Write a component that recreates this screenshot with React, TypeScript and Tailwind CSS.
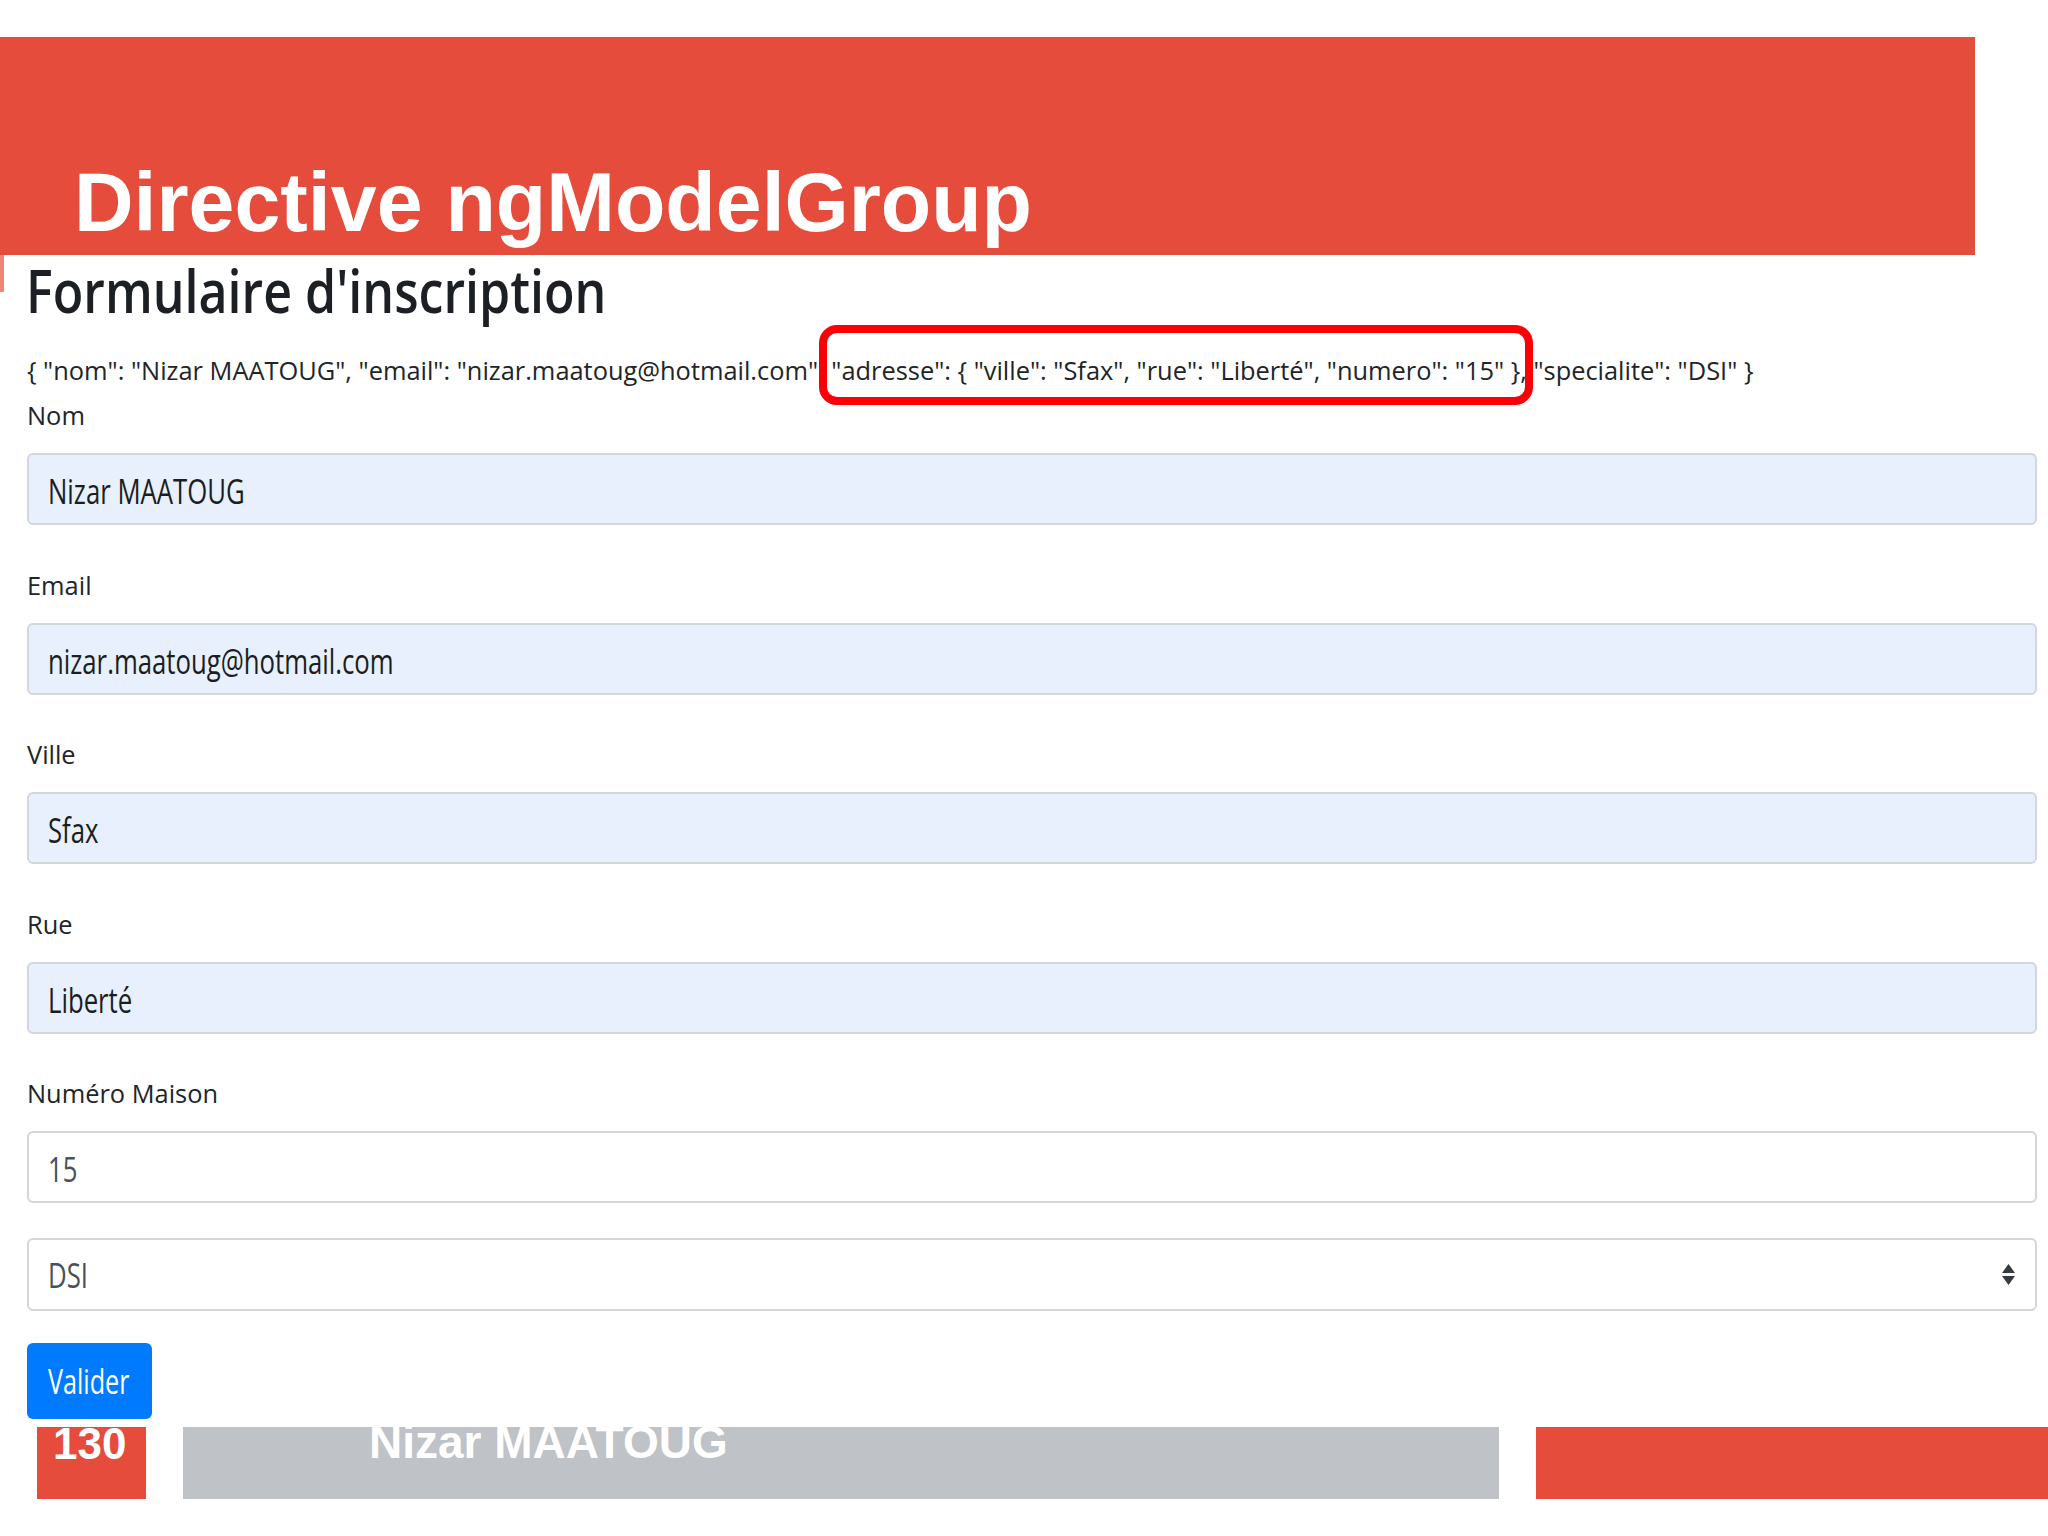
import { useState } from 'react';

const RED = 'bg-[#e54c3c]';

const fields = [
  { label: 'Nom', value: 'Nizar MAATOUG', filled: true },
  { label: 'Email', value: 'nizar.maatoug@hotmail.com', filled: true },
  { label: 'Ville', value: 'Sfax', filled: true },
  { label: 'Rue', value: 'Liberté', filled: true },
  { label: 'Numéro Maison', value: '15', filled: false },
];

function FieldBox({ value, filled }: { value: string; filled: boolean }) {
  return (
    <div
      className={
        filled
          ? 'mt-[20px] h-[72px] rounded-[6px] border-2 border-[#d3d6db] bg-[#e8f0fe] pl-[19px] text-[35px] leading-[71px] text-[#1b1e21]'
          : 'mt-[20px] h-[72px] rounded-[6px] border-2 border-[#d3d6db] bg-white pl-[19px] text-[35px] leading-[71px] text-[#495057]'
      }
    >
      <span className="inline-block origin-left scale-x-[0.735] whitespace-nowrap">{value}</span>
    </div>
  );
}

function SelectArrows() {
  return (
    <svg width="13" height="21" viewBox="0 0 13 21" className="shrink-0">
      <polygon points="6.5,0 13,9 0,9" fill="#343a40" />
      <polygon points="0,12 13,12 6.5,21" fill="#343a40" />
    </svg>
  );
}

export default function App() {
  const [specialite] = useState('DSI');

  return (
    <div className="relative h-[1536px] w-[2048px] overflow-hidden bg-white font-['Open_Sans',sans-serif] text-[#212529]">
      {/* slide header */}
      <div className={`mt-[37px] h-[218px] w-[1975px] ${RED} pl-[74px] pt-[124px]`}>
        <h1 className="font-['Liberation_Sans',Arial,sans-serif] text-[82.5px] font-bold leading-[82px] text-white whitespace-nowrap">
          Directive ngModelGroup
        </h1>
      </div>

      <div className="relative pl-[27px] pr-[11px]">
        <div className={`absolute left-0 top-0 h-[37px] w-[4px] bg-[#ec8478]`} />

        <h2 className="-ml-[1px] h-[70px] text-[60px] font-semibold leading-[70px] whitespace-nowrap text-[#1c1f23]">
          <span className="inline-block origin-left scale-x-[0.835]">Formulaire d'inscription</span>
        </h2>

        <div className="mt-[27px] h-[36px] text-[25.4px] leading-[36px] whitespace-nowrap">
          {'{ "nom": "Nizar MAATOUG", "email": "nizar.maatoug@hotmail.com", '}
          <span className="relative">
            {'"adresse": { "ville": "Sfax", "rue": "Liberté", "numero": "15" },'}
            <span className="pointer-events-none absolute -bottom-[18px] -left-[12px] -right-[6px] -top-[28px] rounded-[18px] border-[8px] border-[#fb0007]" />
          </span>
          {' "specialite": "' + specialite + '" }'}
        </div>

        {fields.map((f, i) => (
          <div key={f.label}>
            <div className={i === 0 ? 'mt-[9px] h-[36px] text-[25.4px] leading-[36px]' : 'mt-[41.5px] h-[36px] text-[25.4px] leading-[36px]'}>
              {f.label}
            </div>
            <FieldBox value={f.value} filled={f.filled} />
          </div>
        ))}

        <div className="mt-[35px] flex h-[73px] items-center justify-between rounded-[6px] border-2 border-[#d3d6db] bg-white pl-[19px] pr-[20px] text-[35px] text-[#495057]">
          <span className="inline-block origin-left scale-x-[0.735] leading-[71px]">{specialite}</span>
          <SelectArrows />
        </div>

        <button className="mt-[32px] block h-[76px] w-[125px] rounded-[6px] bg-[#007bff] pl-[21px] text-left text-[34px] leading-[76px] text-white">
          <span className="inline-block origin-left scale-x-[0.74]">Valider</span>
        </button>
      </div>

      {/* slide footer */}
      <div className="mt-[8px] flex h-[72px] gap-[37px] pl-[37px] font-['Liberation_Sans',Arial,sans-serif] font-bold text-white">
        <div className={`w-[109px] ${RED} pl-[16px] text-[44px] leading-[33px]`}>130</div>
        <div className="w-[1316px] bg-[#bfc2c7] pl-[186px] text-[46px] leading-[31px] whitespace-nowrap">Nizar MAATOUG</div>
        <div className={`flex-1 ${RED}`} />
      </div>
    </div>
  );
}
